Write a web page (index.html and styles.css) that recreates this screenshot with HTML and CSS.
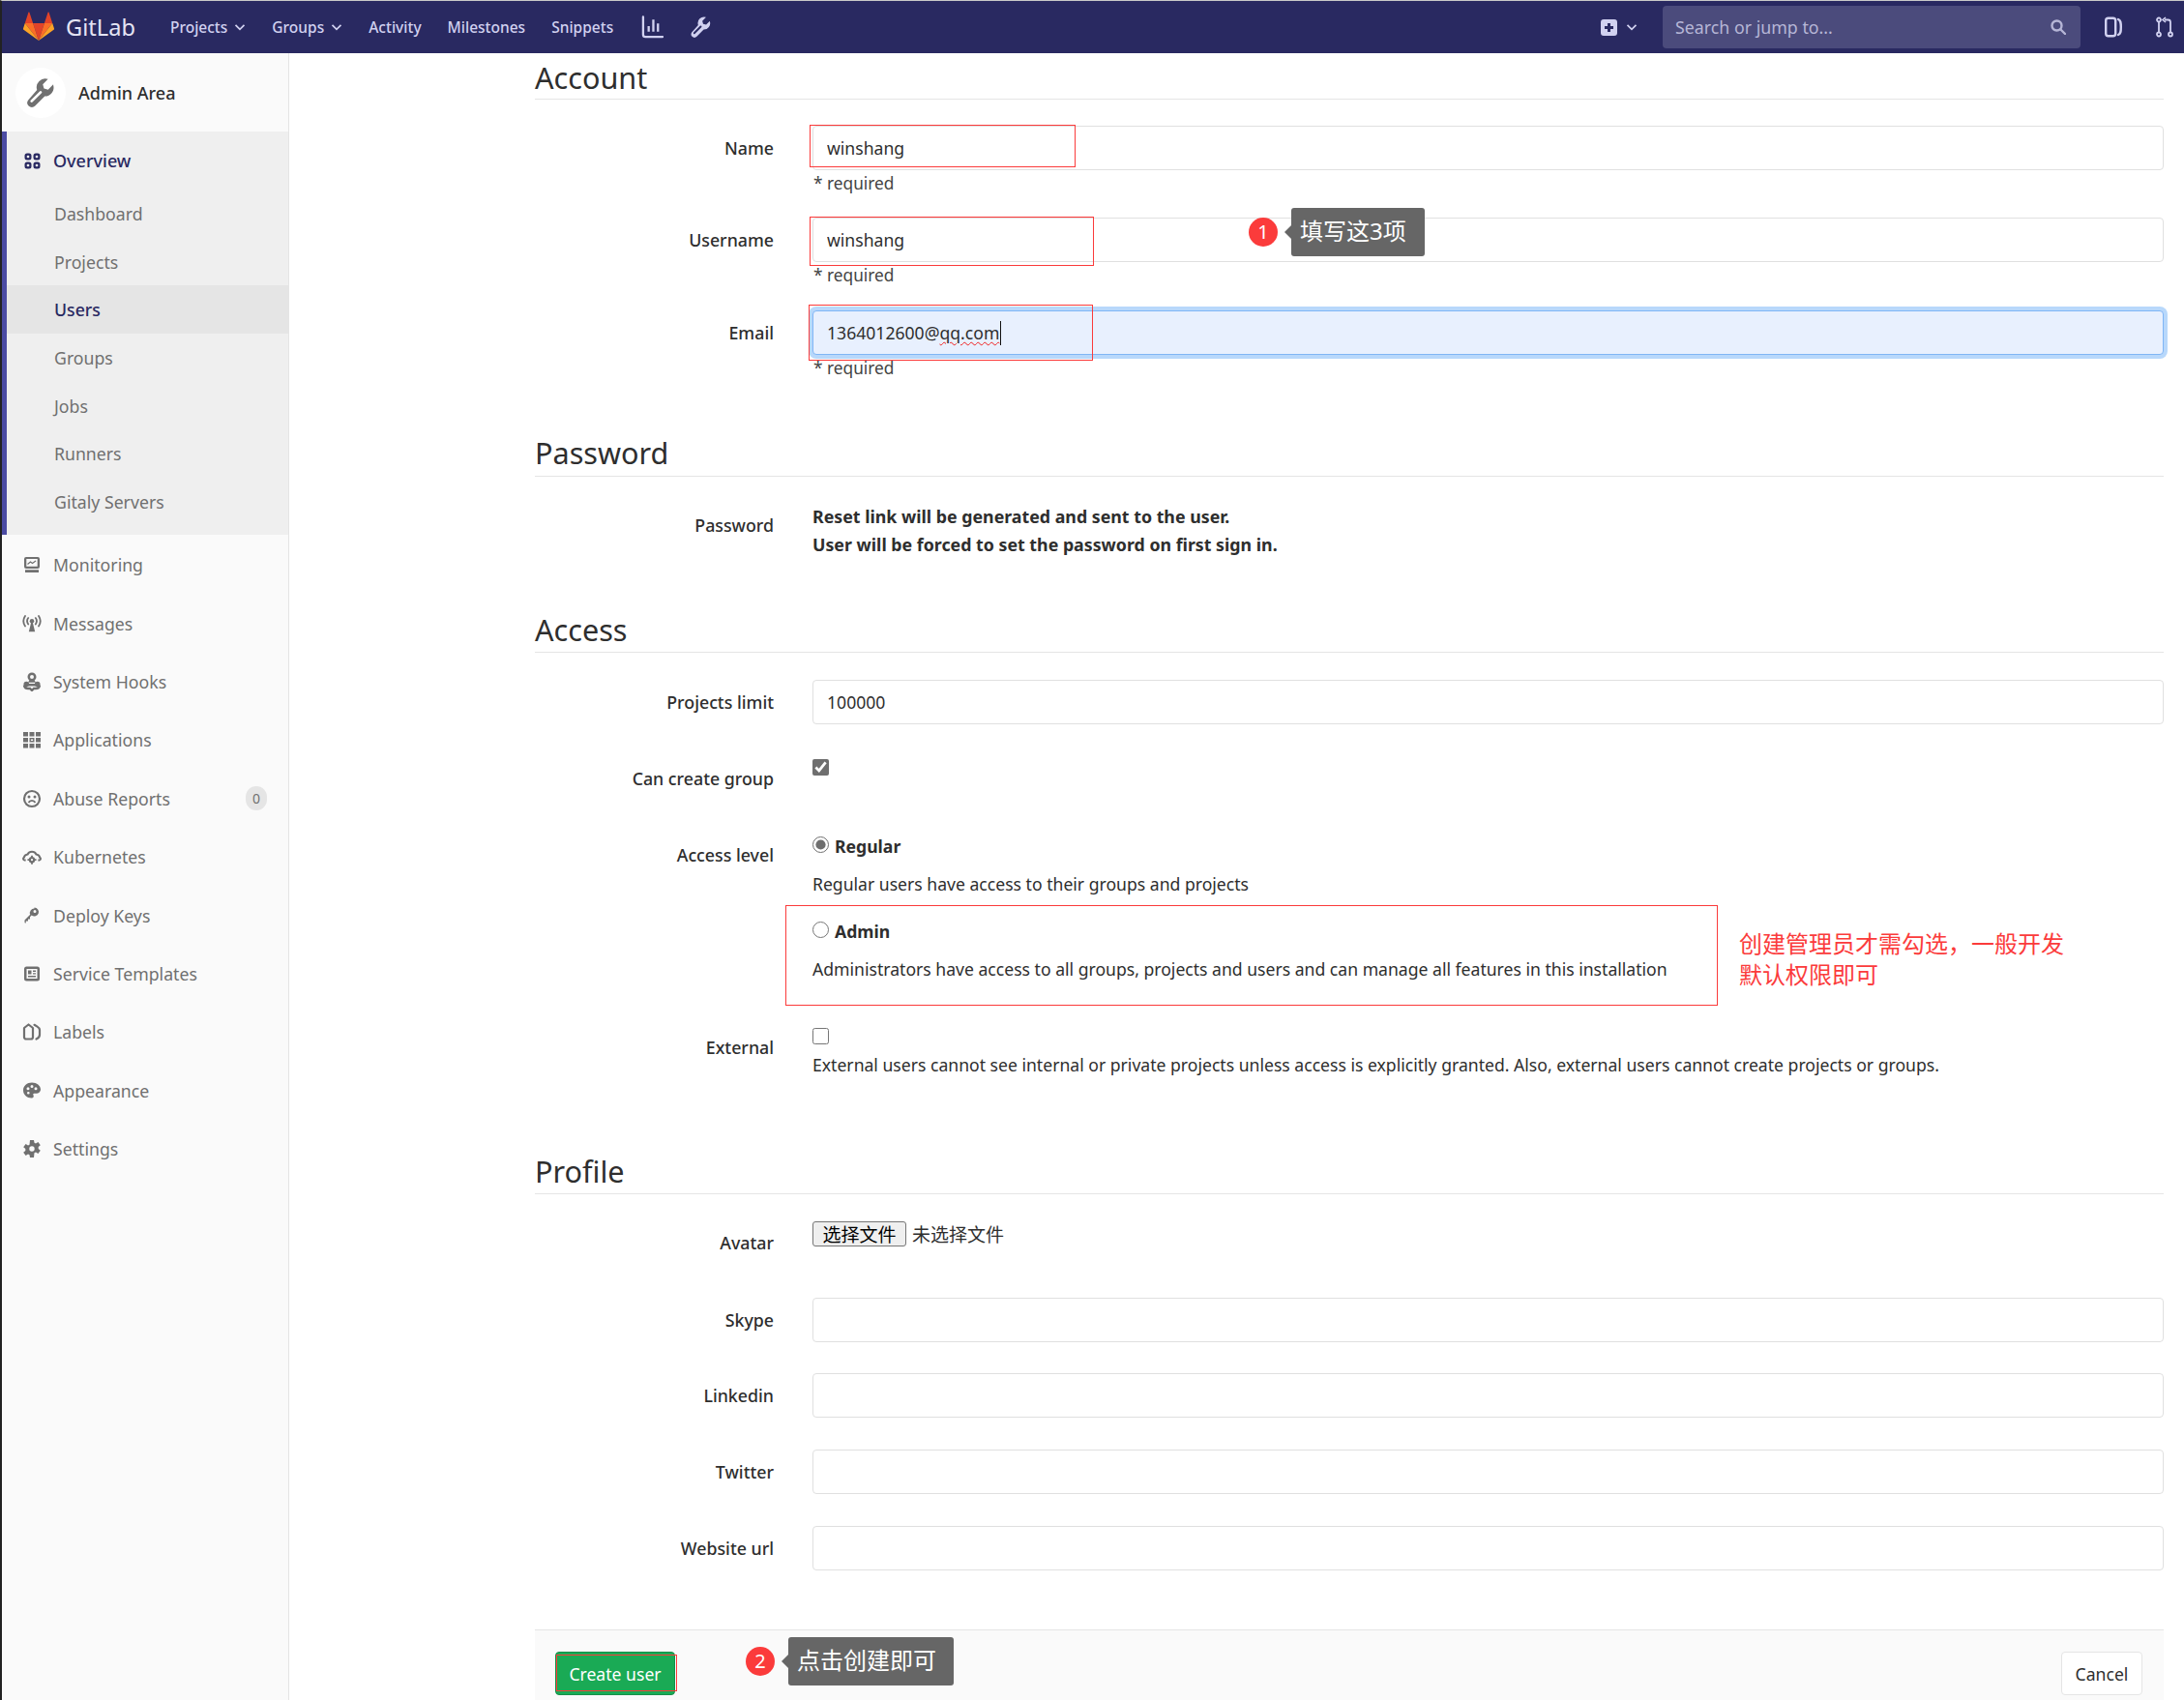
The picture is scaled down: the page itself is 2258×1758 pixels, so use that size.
FILE: index.html
```html
<!DOCTYPE html>
<html lang="en">
<head>
<meta charset="UTF-8">
<title>New User · Admin Area · GitLab</title>
<link rel="stylesheet" href="styles.css">
</head>
<body>

<svg class="sprites" width="0" height="0">
    <symbol id="i-overview" viewBox="0 0 17 17"><path fill-rule="evenodd" d="M3 .5h2A2.500 2.500 0 0 1 7.500 3v2A2.500 2.500 0 0 1 5 7.500H3A2.500 2.500 0 0 1 .5 5V3A2.500 2.500 0 0 1 3 .5zm.7 2.300a1 1 0 0 0-1 1v.4a1 1 0 0 0 1 1h.6a1 1 0 0 0 1-1v-.4a1 1 0 0 0-1-1zM12 .5h2A2.500 2.500 0 0 1 16.500 3v2A2.500 2.500 0 0 1 14 7.500h-2A2.500 2.500 0 0 1 9.500 5V3A2.500 2.500 0 0 1 12 .5zm.7 2.300a1 1 0 0 0-1 1v.4a1 1 0 0 0 1 1h.6a1 1 0 0 0 1-1v-.4a1 1 0 0 0-1-1zM3 9.500h2A2.500 2.500 0 0 1 7.500 12v2A2.500 2.500 0 0 1 5 16.500H3A2.500 2.500 0 0 1 .5 14v-2A2.500 2.500 0 0 1 3 9.500zm.7 2.300a1 1 0 0 0-1 1v.4a1 1 0 0 0 1 1h.6a1 1 0 0 0 1-1v-.4a1 1 0 0 0-1-1zm8.300-2.300h2a2.500 2.500 0 0 1 2.500 2.500v2a2.500 2.500 0 0 1-2.500 2.500h-2A2.500 2.500 0 0 1 9.500 14v-2A2.500 2.500 0 0 1 12 9.500zm.7 2.300a1 1 0 0 0-1 1v.4a1 1 0 0 0 1 1h.6a1 1 0 0 0 1-1v-.4a1 1 0 0 0-1-1z"/></symbol>
    <symbol id="i-monitor" viewBox="0 0 20 20"><path fill-rule="evenodd" d="M4 2h12a2 2 0 0 1 2 2v8a2 2 0 0 1-2 2H4a2 2 0 0 1-2-2V4a2 2 0 0 1 2-2zm.3 2v7.700h11.400V4zM3 15.300h14V18H3z"/><path d="M5.500 9.500l3-2.500 2 1.500 3.500-2.500" fill="none" stroke="currentColor" stroke-width="1.200"/></symbol>
    <symbol id="i-messages" viewBox="0 0 22 20"><circle cx="11" cy="7" r="2.500"/><path d="M10 9h2l2.500 10h-7z"/><path d="M6.800 3.500a6 6 0 0 0 0 7M15.200 3.500a6 6 0 0 1 0 7M3.300 1.200a10.500 10.500 0 0 0 0 11.600M18.700 1.200a10.500 10.500 0 0 1 0 11.600" fill="none" stroke="currentColor" stroke-width="2" stroke-linecap="round"/></symbol>
    <symbol id="i-hook" viewBox="0 0 20 20"><path fill-rule="evenodd" d="M10 .5a4.500 4.500 0 0 1 4.500 4.500c0 1.400-.7 2.700-1.800 3.500l1.300 2.200H6l1.300-2.200A4.500 4.500 0 0 1 5.500 5 4.500 4.500 0 0 1 10 .5zm0 2.500a2 2 0 1 0 0 4 2 2 0 0 0 0-4z"/><path d="M6 12h8v2.500H6z"/><circle cx="4.300" cy="12.500" r="2.800"/><circle cx="15.700" cy="12.500" r="2.800"/><path d="M2 13.500a4 4 0 0 0 4 3.500h2l2 2 2-2h2a4 4 0 0 0 4-3.500" fill="none" stroke="currentColor" stroke-width="2.400"/></symbol>
    <symbol id="i-apps" viewBox="0 0 20 20"><path d="M1 2h5v4.500H1zM7.500 2h5v4.500h-5zM14 2h5v4.500h-5zM1 8h5v4.500H1zM14 8h5v4.500h-5zM1 14h5v4.500H1zM14 14h5v4.500h-5zM7.500 14h5v4.500h-5z"/><path d="M8.200 8.700h3.600v3.100H8.200z" fill="none" stroke="currentColor" stroke-width="1.400"/></symbol>
    <symbol id="i-abuse" viewBox="0 0 20 20"><circle cx="10" cy="10" r="8" fill="none" stroke="currentColor" stroke-width="2.200"/><circle cx="7" cy="8" r="1.500"/><circle cx="13" cy="8" r="1.500"/><path d="M6.500 14a4 4 0 0 1 7 0" fill="none" stroke="currentColor" stroke-width="1.800"/></symbol>
    <symbol id="i-kube" viewBox="0 0 22 20"><path d="M4 13.800H2.500a1.500 1.500 0 0 1-.6-2.800 5 5 0 0 1 4.200-3.800 5.500 5.500 0 0 1 9.800 0 5 5 0 0 1 4.200 3.800 1.500 1.500 0 0 1-.6 2.800H18" fill="none" stroke="currentColor" stroke-width="2.200"/><circle cx="11" cy="13.500" r="3.500"/><circle cx="11" cy="13.500" r="1.200" fill="#fafafa"/><path d="M10 8.500h2v2h-2zM10 16.500h2v2h-2zM6 12.500h2v2H6zM14 12.500h2v2h-2z"/></symbol>
    <symbol id="i-key" viewBox="0 0 20 20"><path fill-rule="evenodd" d="M12.500 1.500a4.500 4.500 0 1 1-2.800 8L8 11.200V13.500H6v2H3.800v2H3l-.5-.5v-2.600l5.700-5.700a4.500 4.500 0 0 1 4.300-6.200zm.5 2.500a1.500 1.500 0 1 0 0 3 1.500 1.500 0 0 0 0-3z"/></symbol>
    <symbol id="i-template" viewBox="0 0 20 20"><path fill-rule="evenodd" d="M4.500 2.500h11a2.500 2.500 0 0 1 2.500 2.500v10a2.500 2.500 0 0 1-2.500 2.500h-11A2.500 2.500 0 0 1 2 15V5a2.500 2.500 0 0 1 2.500-2.500zM4.500 5v10h11V5zM6 6.500h3.500v4H6zm5 0h3v1.500h-3zm0 2.800h3v1.200h-3zM6 12h8v1.500H6z"/></symbol>
    <symbol id="i-labels" viewBox="0 0 20 20"><path d="M6.500 2.500L11 6v9.500a2 2 0 0 1-2 2H4a2 2 0 0 1-2-2V6z" fill="none" stroke="currentColor" stroke-width="2.200" stroke-linejoin="round"/><path d="M12.500 2.800l3 1.800c1.300.8 2.500 2 2.500 3.400v5c0 2-1.400 3.500-3.500 4.500" fill="none" stroke="currentColor" stroke-width="2.200" stroke-linecap="round"/></symbol>
    <symbol id="i-palette" viewBox="0 0 20 20"><path fill-rule="evenodd" d="M10 1.500c5 0 9 3.300 9 7 0 2.700-2.400 4.300-4.700 4.300h-2c-1 0-1.300.9-.8 1.600.7 1 .2 3.100-1.900 3.100C5 17.500 1 14 1 9.500S5 1.500 10 1.500zM6 6.300a1.500 1.500 0 1 0 0 3 1.500 1.500 0 0 0 0-3zm4-2.300a1.500 1.500 0 1 0 0 3 1.500 1.500 0 0 0 0-3zm4 2.300a1.500 1.500 0 1 0 0 3 1.500 1.500 0 0 0 0-3zM6.300 11a1.300 1.300 0 1 0 0 2.600 1.300 1.300 0 0 0 0-2.600z"/></symbol>
    <symbol id="i-gear" viewBox="0 0 20 20"><path fill-rule="evenodd" d="M8 1h4l.5 2.800 1.500.7 2.400-1.500 2.400 3.300-2.100 1.800v1.800l2.100 1.800-2.400 3.300-2.400-1.500-1.500.7L12 19H8l-.5-2.800-1.500-.7-2.400 1.500-2.400-3.300 2.100-1.800V10.100L1.200 8.300l2.400-3.300L6 6.500l1.500-.7zM10 7.300a2.700 2.700 0 1 0 0 5.400 2.700 2.700 0 0 0 0-5.400z"/></symbol>
    <symbol id="i-wrench" viewBox="0 0 24 24"><path d="M21.800 5.500l-4 4-3.200-.9-.9-3.200 4-4a6.700 6.700 0 0 0-8.500 8.400L2.700 17.300a3.600 3.600 0 0 0 0 4.900 3.600 3.600 0 0 0 5 0l7.500-7.500a6.700 6.700 0 0 0 6.600-8.700z"/><path d="M12 11.500l-7 7" fill="none" stroke="var(--wrench-hole, #fff)" stroke-width="2" stroke-linecap="round"/></symbol>
    <symbol id="i-chevron" viewBox="0 0 12 12"><path d="M1.500 3.800L6 8.300l4.500-4.500" fill="none" stroke="currentColor" stroke-width="1.700"/></symbol>
</svg>

<header class="topbar">
    <a class="brand">
        <svg class="logo" viewBox="0 0 32 32">
            <path fill="#e24329" d="M16 30l5.900-18.100H10.100z"/>
            <path fill="#fc6d26" d="M16 30l-5.900-18.100H1.800z"/>
            <path fill="#fca326" d="M1.800 11.900L0 17.400c-.16.500.02 1.050.45 1.360L16 30z"/>
            <path fill="#e24329" d="M1.800 11.900h8.300L6.500 1c-.18-.56-.98-.56-1.160 0z"/>
            <path fill="#fc6d26" d="M16 30l5.900-18.100h8.300z"/>
            <path fill="#fca326" d="M30.200 11.900l1.800 5.500c.16.500-.02 1.050-.45 1.360L16 30z"/>
            <path fill="#e24329" d="M30.200 11.900h-8.300L25.500 1c.18-.56.98-.56 1.160 0z"/>
        </svg>
        <span class="brand-name">GitLab</span>
    </a>
    <nav class="topnav">
        <a class="topnav-item">Projects <svg class="chev"><use href="#i-chevron"/></svg></a>
        <a class="topnav-item">Groups <svg class="chev"><use href="#i-chevron"/></svg></a>
        <a class="topnav-item">Activity</a>
        <a class="topnav-item">Milestones</a>
        <a class="topnav-item item-last">Snippets</a>
        <a class="topnav-item">
            <svg class="top-icon" viewBox="0 0 24 24" fill="none" stroke="currentColor" stroke-width="2.400"><path d="M2 1v19a2.500 2.500 0 0 0 2.500 2.500H23" stroke-linecap="round"/><path d="M8 11v6M13 4v13M18 8v9"/></svg>
        </a>
        <a class="topnav-item wrench-link"><svg class="top-icon"><use href="#i-wrench"/></svg></a>
    </nav>
    <div class="top-right">
        <a class="new-menu">
            <svg class="plus" viewBox="0 0 17 17"><path fill-rule="evenodd" d="M3 0h11a3 3 0 0 1 3 3v11a3 3 0 0 1-3 3H3a3 3 0 0 1-3-3V3a3 3 0 0 1 3-3zm4 4v3H4v3h3v3h3v-3h3V7h-3V4z"/></svg>
            <svg class="chev"><use href="#i-chevron"/></svg>
        </a>
        <div class="search">
            <span>Search or jump to...</span>
            <svg class="search-icon" viewBox="0 0 16 16" fill="none" stroke="currentColor" stroke-width="2.400"><circle cx="6.500" cy="6.500" r="5"/><path d="M10.500 10.500l4.500 4.500" stroke-linecap="round"/></svg>
        </div>
        <a class="top-action">
            <svg class="issues-icon" viewBox="0 0 18 22" fill="none" stroke="currentColor" stroke-width="2.400"><rect x="1.200" y="1.800" width="10" height="18.400" rx="2.500"/><path d="M14 3c2.500 1 2.800 3 2.800 8s-.3 7-2.800 8" stroke-linecap="round"/></svg>
        </a>
        <a class="top-action">
            <svg class="mr-icon" viewBox="0 0 18 22" fill="none" stroke="currentColor" stroke-width="1.800"><circle cx="3" cy="3.500" r="2"/><circle cx="3" cy="18.500" r="2"/><circle cx="15" cy="18.500" r="2"/><path d="M3 5.500v11M15 16.500V6a2.500 2.500 0 0 0-2.500-2.500H9"/><path d="M10 1L7 3.500 10 6" stroke-width="1.600"/></svg>
        </a>
    </div>
</header>

<div class="layout">
    <aside class="sidebar">
        <div class="context">
            <span class="context-icon"><svg><use href="#i-wrench"/></svg></span>
            <span class="context-name">Admin Area</span>
        </div>
        <ul class="side-group">
            <li class="side-head"><svg class="side-icon"><use href="#i-overview"/></svg>Overview</li>
            <li class="side-sub">Dashboard</li>
            <li class="side-sub">Projects</li>
            <li class="side-sub is-active">Users</li>
            <li class="side-sub">Groups</li>
            <li class="side-sub">Jobs</li>
            <li class="side-sub">Runners</li>
            <li class="side-sub">Gitaly Servers</li>
        </ul>
        <ul class="side-list">
            <li class="side-item"><svg class="side-icon"><use href="#i-monitor"/></svg>Monitoring</li>
            <li class="side-item"><svg class="side-icon"><use href="#i-messages"/></svg>Messages</li>
            <li class="side-item"><svg class="side-icon"><use href="#i-hook"/></svg>System Hooks</li>
            <li class="side-item"><svg class="side-icon"><use href="#i-apps"/></svg>Applications</li>
            <li class="side-item"><svg class="side-icon"><use href="#i-abuse"/></svg>Abuse Reports<span class="badge">0</span></li>
            <li class="side-item"><svg class="side-icon"><use href="#i-kube"/></svg>Kubernetes</li>
            <li class="side-item"><svg class="side-icon"><use href="#i-key"/></svg>Deploy Keys</li>
            <li class="side-item"><svg class="side-icon"><use href="#i-template"/></svg>Service Templates</li>
            <li class="side-item"><svg class="side-icon"><use href="#i-labels"/></svg>Labels</li>
            <li class="side-item"><svg class="side-icon"><use href="#i-palette"/></svg>Appearance</li>
            <li class="side-item"><svg class="side-icon"><use href="#i-gear"/></svg>Settings</li>
        </ul>
    </aside>

    <main class="content">
        <form class="user-form">
            <h3 class="section-title title-first">Account</h3>
            <div class="row row-name">
                <label class="row-label">Name</label>
                <div class="row-field">
                    <input class="text-input" type="text" value="winshang">
                    <p class="required">* required</p>
                </div>
            </div>
            <div class="row row-username">
                <label class="row-label">Username</label>
                <div class="row-field">
                    <input class="text-input" type="text" value="winshang">
                    <p class="required">* required</p>
                </div>
            </div>
            <div class="row row-email">
                <label class="row-label">Email</label>
                <div class="row-field">
                    <div class="text-input is-focused">1364012600@<span class="misspelt">qq.com</span><span class="caret"></span></div>
                    <p class="required">* required</p>
                </div>
            </div>

            <h3 class="section-title title-password">Password</h3>
            <div class="row row-password">
                <label class="row-label">Password</label>
                <div class="row-field password-note">
                    <strong>Reset link will be generated and sent to the user.</strong><br>
                    <strong>User will be forced to set the password on first sign in.</strong>
                </div>
            </div>

            <h3 class="section-title title-access">Access</h3>
            <div class="row row-limit">
                <label class="row-label">Projects limit</label>
                <div class="row-field"><input class="text-input" type="text" value="100000"></div>
            </div>
            <div class="row row-group">
                <label class="row-label">Can create group</label>
                <div class="row-field"><input class="tick" type="checkbox" checked></div>
            </div>
            <div class="row row-level">
                <label class="row-label">Access level</label>
                <div class="row-field">
                    <div class="choice"><input class="tick" type="radio" name="level" checked><b>Regular</b></div>
                    <p class="choice-help">Regular users have access to their groups and projects</p>
                    <div class="choice choice-admin"><input class="tick" type="radio" name="level"><b>Admin</b></div>
                    <p class="choice-help">Administrators have access to all groups, projects and users and can manage all features in this installation</p>
                </div>
            </div>
            <div class="row row-external">
                <label class="row-label">External</label>
                <div class="row-field">
                    <input class="tick tick-block" type="checkbox">
                    <p class="external-help">External users cannot see internal or private projects unless access is explicitly granted. Also, external users cannot create projects or groups.</p>
                </div>
            </div>

            <h3 class="section-title title-profile">Profile</h3>
            <div class="row row-avatar">
                <label class="row-label">Avatar</label>
                <div class="row-field file-field">
                    <button class="file-button" type="button">选择文件</button>
                    <span class="file-name">未选择文件</span>
                </div>
            </div>
            <div class="row row-social row-skype">
                <label class="row-label">Skype</label>
                <div class="row-field"><input class="text-input" type="text"></div>
            </div>
            <div class="row row-social row-linkedin">
                <label class="row-label">Linkedin</label>
                <div class="row-field"><input class="text-input" type="text"></div>
            </div>
            <div class="row row-social">
                <label class="row-label">Twitter</label>
                <div class="row-field"><input class="text-input" type="text"></div>
            </div>
            <div class="row row-social">
                <label class="row-label">Website url</label>
                <div class="row-field"><input class="text-input" type="text"></div>
            </div>

            <div class="form-actions">
                <button class="btn btn-create" type="button">Create user</button>
                <button class="btn btn-cancel" type="button">Cancel</button>
            </div>
        </form>
    </main>
</div>

<!-- red marks and callouts drawn over the screenshot -->
<div class="mark mark-name"></div>
<div class="mark mark-username"></div>
<div class="mark mark-email"></div>
<div class="mark mark-admin"></div>
<div class="mark mark-create"></div>
<div class="step step-one">1</div>
<div class="callout callout-one">填写这3项</div>
<div class="step step-two">2</div>
<div class="callout callout-two">点击创建即可</div>
<p class="note">创建管理员才需勾选，一般开发<br>默认权限即可</p>

</body>
</html>
```

FILE: styles.css
```css
* {
    box-sizing: border-box;
}
html, body {
    height: 1758px;
    overflow: hidden;
}
body {
    margin: 0;
    border-top: 1px solid #c9c9c9;
    border-left: 2px solid #222;
    background-color: #fff;
    font-family: "Noto Sans", "Noto Sans CJK SC", sans-serif;
    font-size: 17.6px;
    color: #2e2e2e;
}
ul {
    list-style: none;
    margin: 0;
    padding: 0;
}
p {
    margin: 0;
}
.sprites {
    position: absolute;
}

/* top bar */
.topbar {
    display: flex;
    align-items: center;
    height: 54px;
    padding-left: 22px;
    background-color: #292961;
    color: #d1d1f0;
}
.brand {
    display: flex;
    align-items: center;
    gap: 12px;
    width: 152px;
    color: #e4e4f4;
}
.logo {
    width: 32px;
    height: 32px;
}
.brand-name {
    font-size: 23.6px;
}
.topnav {
    display: flex;
    align-items: center;
    font-size: 15.5px;
    font-weight: 500;
}
.topnav-item {
    display: flex;
    align-items: center;
    gap: 7px;
    margin-right: 27px;
}
.item-last {
    margin-right: 29px;
}
.chev {
    width: 12px;
    height: 12px;
}
.top-icon {
    width: 23px;
    height: 24px;
}
.wrench-link {
    --wrench-hole: #292961;
    fill: currentColor;
}
.top-right {
    display: flex;
    align-items: center;
    margin-left: auto;
}
.new-menu {
    display: flex;
    align-items: center;
    gap: 9px;
    margin-right: 26px;
}
.plus {
    width: 17px;
    height: 17px;
    fill: currentColor;
}
.search {
    display: flex;
    align-items: center;
    justify-content: space-between;
    width: 432px;
    height: 44px;
    padding: 0 15px 0 13px;
    border-radius: 4px;
    background-color: #4b4b7c;
    color: #b6b6d6;
    font-size: 17.8px;
}
.search-icon {
    width: 16px;
    height: 16px;
}
.top-action {
    display: flex;
}
.issues-icon {
    width: 18px;
    height: 22px;
    margin: 0 35px 0 25px;
}
.mr-icon {
    width: 18px;
    height: 22px;
    margin-right: 11px;
}

/* page layout */
.layout {
    display: flex;
    height: 1703px;
}

/* sidebar */
.sidebar {
    flex: none;
    width: 297px;
    border-right: 1px solid #e5e5e5;
    background-color: #fafafa;
    color: #707070;
    font-size: 17.7px;
}
.context {
    display: flex;
    align-items: center;
    gap: 13px;
    height: 81px;
    padding-left: 14px;
    color: #2e2e2e;
}
.context-icon {
    display: flex;
    align-items: center;
    justify-content: center;
    width: 52px;
    height: 52px;
    border-radius: 50%;
    background-color: #fff;
    color: #707070;
}
.context-icon svg {
    width: 32px;
    height: 32px;
    fill: currentColor;
}
.context-name {
    font-size: 18px;
    font-weight: 500;
}
.side-group {
    height: 417px;
    border-left: 5px solid #4b4ba3;
    background-color: #efefef;
}
.side-head {
    display: flex;
    align-items: center;
    height: 60px;
    padding-left: 18px;
    color: #292961;
    font-size: 18px;
    font-weight: 500;
}
.side-head .side-icon {
    width: 17px;
    height: 17px;
    margin-right: 13px;
}
.side-sub {
    display: flex;
    align-items: center;
    height: 49.7px;
    padding-left: 49px;
}
.side-sub.is-active {
    background-color: #e5e5e5;
    color: #292961;
    font-weight: 500;
}
.side-list {
    padding-top: 1px;
}
.side-item {
    display: flex;
    align-items: center;
    height: 60.4px;
    padding: 0 22px 0 21px;
}
.side-icon {
    flex: none;
    width: 20px;
    height: 20px;
    margin-right: 12px;
    fill: currentColor;
}
.badge {
    width: 22px;
    height: 25px;
    margin-left: auto;
    border-radius: 12px;
    background-color: #e5e5e5;
    font-size: 14px;
    line-height: 25px;
    text-align: center;
}

/* form */
.content {
    flex: 1;
    min-width: 0;
    padding: 0 21px 0 254px;
}
.section-title {
    height: 47px;
    margin: 0;
    border-bottom: 1px solid #e5e5e5;
    font-size: 30.6px;
    font-weight: 400;
    line-height: 46px;
}
.title-first {
    height: 48px;
    line-height: 50px;
}
.title-password {
    margin-top: 55px;
    line-height: 44px;
}
.title-access {
    margin-top: 50px;
}
.title-profile {
    margin-top: 75px;
}
.row {
    display: grid;
    grid-template-columns: 247px 1fr;
    column-gap: 40px;
}
.row-label {
    font-size: 17.8px;
    font-weight: 500;
    line-height: 46px;
    text-align: right;
}
.text-input {
    display: block;
    width: 100%;
    height: 46px;
    padding: 0 14px;
    border: 1px solid #e0e0e0;
    border-radius: 4px;
    background-color: #fff;
    font: inherit;
    line-height: 44px;
    color: #2e2e2e;
    outline: none;
}
.text-input.is-focused {
    border-color: #80b6f5;
    background-color: #e8f0fe;
    box-shadow: 0 0 0 4px #b8d8fb;
}
.misspelt {
    text-decoration: underline wavy #f02020 1px;
    text-underline-offset: 2px;
}
.caret {
    display: inline-block;
    width: 1px;
    height: 25px;
    margin-left: 1px;
    background-color: #111;
    vertical-align: -6px;
}
.required {
    margin-top: 4px;
    padding-left: 1px;
    font-size: 17.3px;
    line-height: 20px;
    color: #444;
}
.row-name {
    margin-top: 27px;
}
.row-username {
    margin-top: 25px;
}
.row-email {
    margin-top: 26px;
}
.row-password {
    margin-top: 27px;
}
.password-note {
    font-size: 17.8px;
    line-height: 29px;
    color: #2e2e2e;
}
.row-limit {
    margin-top: 28px;
}
.row-group {
    margin-top: 34px;
    height: 46px;
}
.row-group .row-label, .row-level .row-label {
    line-height: 44px;
}
.row-level {
    margin-top: 33px;
}
.row-external {
    margin-top: 44px;
}
.row-avatar {
    margin-top: 27px;
}
.row-social {
    margin-top: 33px;
}
.row-skype {
    margin-top: 34px;
}
.row-linkedin {
    margin-top: 32px;
}
.tick {
    display: block;
    flex: none;
    width: 17px;
    height: 17px;
    margin: 2px 0 0;
    accent-color: #6f6f6f;
}
.tick-block {
    margin-top: 3px;
}
.choice {
    display: flex;
    align-items: flex-start;
    gap: 6px;
    height: 28px;
    line-height: 26px;
    color: #2e2e2e;
}
.choice .tick {
    margin-top: 3px;
}
.choice-help {
    margin-top: 10px;
    line-height: 28px;
}
.choice-admin {
    margin-top: 22px;
}
.external-help {
    margin-top: 9px;
    line-height: 24px;
}
.file-field {
    display: flex;
    align-items: flex-start;
    gap: 6px;
    padding-top: 1px;
}
.file-button {
    width: 97px;
    height: 26px;
    padding: 0;
    border: 1px solid #767676;
    border-radius: 3px;
    background-color: #efefef;
    font: 19px/24px "Noto Sans CJK SC", sans-serif;
    color: #000;
}
.file-name {
    font: 19px/26px "Noto Sans CJK SC", sans-serif;
}
.form-actions {
    display: flex;
    justify-content: space-between;
    height: 80px;
    margin-top: 61px;
    padding: 22px 22px 0 21px;
    border-top: 1px solid #e5e5e5;
    background-color: #fafafa;
}
.btn {
    height: 45px;
    border-radius: 4px;
    font: inherit;
}
.btn-create {
    width: 124px;
    border: 1px solid #168f48;
    background-color: #1aaa55;
    color: #fff;
}
.btn-cancel {
    width: 84px;
    border: 1px solid #e5e5e5;
    background-color: #fff;
    color: #2e2e2e;
}

/* annotations over the form */
.mark {
    position: absolute;
    border: 1px solid #fb3b3b;
}
.mark-name {
    left: 837px;
    top: 129px;
    width: 275px;
    height: 44px;
}
.mark-username {
    left: 837px;
    top: 224px;
    width: 294px;
    height: 51px;
}
.mark-email {
    left: 836px;
    top: 315px;
    width: 294px;
    height: 58px;
}
.mark-admin {
    left: 812px;
    top: 936px;
    width: 964px;
    height: 104px;
}
.mark-create {
    left: 575px;
    top: 1711px;
    width: 125px;
    height: 38px;
}
.step {
    position: absolute;
    width: 30px;
    height: 30px;
    border-radius: 50%;
    background-color: #fb3b3b;
    color: #fff;
    font-size: 20px;
    line-height: 30px;
    text-align: center;
}
.step-one {
    left: 1291px;
    top: 225px;
}
.step-two {
    left: 771px;
    top: 1703px;
}
.callout {
    position: absolute;
    height: 50px;
    padding-left: 9px;
    border-radius: 3px;
    background-color: #666;
    color: #fff;
    font-size: 24px;
    line-height: 48px;
}
.callout::before {
    content: "";
    position: absolute;
    left: -7px;
    top: 18px;
    border-top: 7px solid transparent;
    border-bottom: 7px solid transparent;
    border-right: 7px solid #666;
}
.callout-one {
    left: 1335px;
    top: 215px;
    width: 138px;
}
.callout-two {
    left: 815px;
    top: 1693px;
    width: 171px;
}
.note {
    position: absolute;
    left: 1798px;
    top: 960px;
    color: #fb3b3b;
    font-size: 24px;
    line-height: 32px;
}
```
